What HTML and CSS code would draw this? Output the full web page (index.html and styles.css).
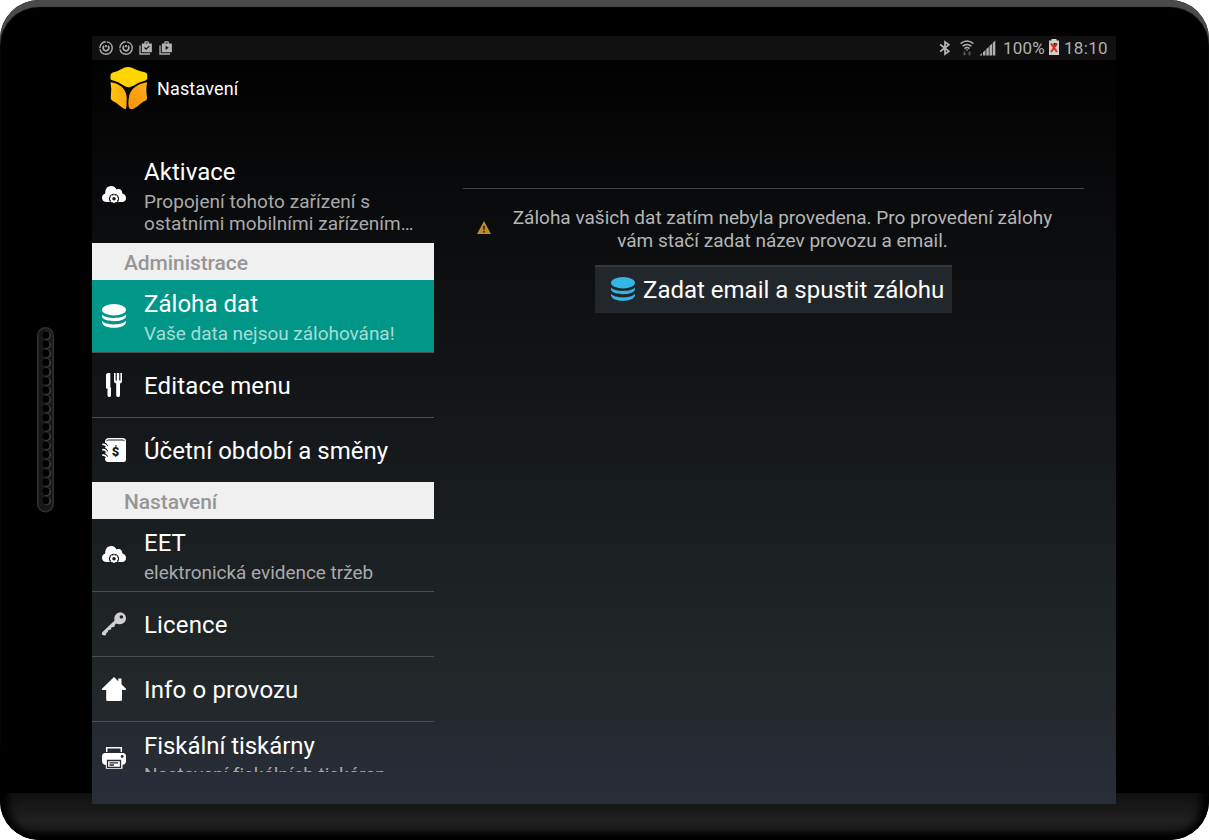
FILE: index.html
```html
<!DOCTYPE html>
<html lang="cs">
<head>
<meta charset="utf-8">
<title>Nastavení</title>
<link rel="stylesheet" href="styles.css">
</head>
<body>
<svg class="defs" aria-hidden="true">
  <symbol id="cloud" viewBox="0 0 24 24">
    <path fill="#fff" d="M4 19C1.500 19 0 17 0 14.800C0 12.500 1.500 11 3.300 10.500C3 6 5 3.300 9 3C12 3 13.700 4.600 14.500 6.500C17.500 5 20.500 7 20.300 10.500C22.500 10.700 24 12.500 24 15C24 17.500 22.500 19 20 19Z"/>
    <circle cx="12" cy="15.800" r="5.100" fill="#16191b"/>
    <circle cx="12" cy="15.800" r="2.700" fill="none" stroke="#fff" stroke-width="1.900"/>
    <path stroke="#fff" stroke-width="1.400" d="M12 11.600v1M12 18.800v1.200M8 15.800h1M15 15.800h1M9 12.800l.9.900M15 12.800l-.9.900M9 18.800l.9-.9M15 18.800l-.9-.9"/>
  </symbol>
  <symbol id="database" viewBox="0 0 24 24">
    <ellipse cx="12" cy="5.700" rx="12" ry="5.700"/>
    <path d="M0 10.500C3 15 21 15 24 10.500V12.200C23 18.800 1 18.800 0 12.200Z"/>
    <path d="M0 16.800C3 21.600 21 21.600 24 16.800V18.300C23 25.700 1 25.700 0 18.300Z"/>
  </symbol>
  <symbol id="circle-app" viewBox="0 0 14 14">
    <g fill="none" stroke="#b0b0b0"><circle cx="7" cy="7" r="6.200" stroke-width="1.400" stroke-dasharray="17.500 1.200 9.500 1.200 8.700 1"/><path stroke-width="1.700" d="M5 4.800A2.900 2.900 0 1 0 9 4.800M7 4v2.200"/></g>
  </symbol>
</svg>
<div class="device">
  <div class="chin"></div>
  <svg class="speaker" width="17" height="186" viewBox="0 0 17 186">
    <defs><pattern id="holes" width="17" height="9.190" patternUnits="userSpaceOnUse" y="3.600">
      <circle cx="9.600" cy="4.800" r="4.300" fill="#484848"/><circle cx="8.900" cy="4.500" r="3.700" fill="#000"/></pattern></defs>
    <rect x=".8" y=".8" width="15.400" height="184" rx="7.700" fill="#171717" stroke="#303030" stroke-width="1.500"/>
    <rect y="3.600" width="17" height="174.600" fill="url(#holes)"/>
  </svg>
  <div class="screen">
    <div class="status">
      <div class="status-left">
        <svg width="14" height="14"><use href="#circle-app"/></svg>
        <svg width="14" height="14"><use href="#circle-app"/></svg>
        <svg width="14" height="14" viewBox="0 0 14 14"><path fill="#b0b0b0" d="M2.800 2.500h2.500V1.200Q5.500.2 6.300.2h2.600q.8 0 1 1V2.500h3v8.700H2.800zM6.600 1.400V2.500h2V1.400z"/><path fill="none" stroke="#b0b0b0" stroke-width="1.300" d="M1 4.500v8.500h10"/><path fill="none" stroke="#111" stroke-width="1.200" d="M5.500 6.500l1.700 1.700 3-3"/></svg>
        <svg width="14" height="14" viewBox="0 0 14 14"><path fill="#b0b0b0" d="M2.800 2.500h2.500V1.200Q5.500.2 6.300.2h2.600q.8 0 1 1V2.500h3v8.700H2.800zM6.600 1.400V2.500h2V1.400z"/><path fill="none" stroke="#b0b0b0" stroke-width="1.300" d="M1 4.500v8.500h10"/><path fill="#111" d="M6.600 4.700v4.200l3.200-2.100z"/></svg>
      </div>
      <div class="status-right">
        <svg class="bt" width="12" height="16" viewBox="0 0 12 16"><path fill="none" stroke="#b4b4b4" stroke-width="1.700" d="M1.200 4.500l8.600 6.700L6 14V2l3.800 2.800L1.200 11.500"/></svg>
        <svg class="wifi" width="14" height="16" viewBox="0 0 14 16"><g fill="none" stroke="#b4b4b4" stroke-width="1.500"><path d="M.6 3.600Q7-1.400 13.400 3.600M2.600 6.200Q7 2.600 11.400 6.200M4.500 8.600Q7 6.600 9.500 8.600"/></g><path fill="#b4b4b4" d="M5.600 9.500h2.800L7 11z"/><path fill="#555" d="M3.700 11.500h1.600v2h1.200l-2 2.200-2-2.200h1.200zM8.700 15.500h1.600v-2h1.200l-2-2.200-2 2.200h1.200z"/></svg>
        <svg class="signal" width="17" height="16" viewBox="0 0 17 16"><path fill="#b0b0b0" d="M.5 15.500L3 13v2.500zM4 15.500V12.200L6.500 10v5.500zM7.300 15.500V9L9.800 7v8.500zM10.500 15.500V6L13 3.800v11.700zM13.700 15.500V3L16.300 .6v14.900z"/></svg>
        <span class="percent">100%</span>
        <svg class="battery" width="10" height="16" viewBox="0 0 10 16"><path fill="#d0d0d0" d="M0 1.500h2.500V0h5v1.500H10V16H0z"/><path fill="#333" d="M4.500 4h3.500v3h-3.500z"/><path stroke="#e02c10" stroke-width="2" d="M2 4.500l6 8.500M8 4.500L2 13"/></svg>
        <span class="clock">18:10</span>
      </div>
    </div>
    <div class="actionbar">
      <svg class="logo" width="38" height="43" viewBox="0 0 38 43">
        <defs><linearGradient id="amber" x1="0" x2="1"><stop offset="0" stop-color="#ffc800"/><stop offset="1" stop-color="#ffa617"/></linearGradient><linearGradient id="orange" x1="1" y1="0" x2="0" y2="1"><stop offset="0" stop-color="#ffb020"/><stop offset="1" stop-color="#f79300"/></linearGradient></defs>
        <path fill="#ffd500" d="M.5 8.500C.5 6.500 2 5.600 4.500 5C10 3.600 12.500 1 16 .3Q19-.3 22 .8C25.500 2.400 29 4.300 34 5Q37.300 5.800 37.300 8V12C36.500 13.700 33 14.200 29.500 15.500C25 17.500 21.500 20.300 18.500 20.300C15 20.200 12 17 7.500 15C4.500 13.700 1 13.500 .5 12Z"/>
        <path fill="url(#amber)" d="M.5 15.300C8 16 16.600 21 16.800 31C16.300 36 17.200 39 15.700 42.300C10 40 8.500 36.500 2 33.500Q.5 32.500.8 30Q2 22 .5 15.300Z"/>
        <path fill="url(#orange)" d="M37.300 15.300C27 17 20.200 21.500 18.800 31C18.200 36 17.800 40.500 20.300 42Q22 42.500 24 41.500C29 39 30.500 35.500 36 33.500Q37.500 32.500 37 30Q35.500 22 37.300 15.300Z"/>
      </svg>
      <h1>Nastavení</h1>
    </div>
    <div class="body">
      <nav class="menu">
        <div class="row flat"><svg class="icon"><use href="#cloud"/></svg><div><p class="title">Aktivace</p><p class="sub wide">Propojení tohoto zařízení s<br>ostatními mobilními zařízením…</p></div></div>
        <h2>Administrace</h2>
        <div class="row active"><svg class="icon"><use href="#database"/></svg><div><p class="title">Záloha dat</p><p class="sub">Vaše data nejsou zálohována!</p></div></div>
        <div class="row single"><svg class="icon" viewBox="0 0 24 24"><path d="M4 2Q4 0 6 0H8.300V14L9 15V22.500Q8.700 24 7.500 24Q5.600 24 5.500 22.500V15.500H4ZM12 0h1.600v7.500h1.200V0h2.400v7.500h1.200V0H20v8q0 2-2 2.500V22.500Q17.800 24 16.200 24Q14.400 24 14.200 22.500V10.500Q12 10 12 8Z"/></svg><p class="title spaced">Editace menu</p></div>
        <div class="row single last"><svg class="icon" viewBox="0 0 24 24"><path d="M6 0H21.500Q24 .5 24 2.500V22Q23.700 24 22 24H5.500Q3.500 23.500 3 21.500V3Q3.500.5 6 0Z"/><path fill="none" stroke="#16191b" stroke-width="1" d="M4.500 3.200Q5 2 6.500 2H20.500Q22 2 22.500 3.200"/><path fill="none" stroke="#16191b" stroke-width="3.200" d="M0 6.500q3-1.500 4.800 2M0 11.900q3-1.500 4.800 2M0 17.300q3-1.500 4.800 2"/><path fill="none" stroke="#fff" stroke-width="1.700" d="M5.200 9Q3 5.500.2 6.500M5.200 14.400Q3 10.900.2 11.900M5.200 19.800Q3 16.300.2 17.300"/><text class="dollar" x="9.700" y="17.800">$</text></svg><p class="title">Účetní období a směny</p></div>
        <h2>Nastavení</h2>
        <div class="row"><svg class="icon"><use href="#cloud"/></svg><div><p class="title">EET</p><p class="sub">elektronická evidence tržeb</p></div></div>
        <div class="row single"><svg class="icon" viewBox="0 0 24 24"><path fill="#d0d0d0" fill-rule="evenodd" d="M17.800.3A6 6 0 0 1 24 6.500A6 6 0 0 1 18 12.300Q15.500 12.500 14.200 11.500L12.700 13L12.800 14.600L9.300 15.400L9 17.600L6.200 18.300L6 20L4.300 21L4 23L2.500 23.500L0 22.800V20.600L12.600 8.500A6.300 6.300 0 0 1 17.800.3ZM19.400 3.200a1.700 1.700 0 1 0 .01 0Z"/></svg><p class="title spaced">Licence</p></div>
        <div class="row single"><svg class="icon" viewBox="0 0 24 24"><path d="M12 0L16.300 4.200V1.500H19.500V7.300L24 11.800V13H20V22.500Q20 24 18.500 24H5.700Q4.200 24 4.200 22.500V13H0V11.800Z"/></svg><p class="title spaced">Info o provozu</p></div>
        <div class="row"><svg class="icon" viewBox="0 0 24 24"><path fill="none" stroke="#fff" stroke-width="1.500" d="M4.700 6V1.800H19.300V6"/><path d="M2.500 7H21.500Q24 7.300 24 10V15Q24 18.500 20.500 19V22.800H3.800V19Q0 18.500 0 15V10Q0 7.300 2.500 7Z"/><path fill="none" stroke="#252a30" stroke-width="1.300" d="M5.500 14.500H18.500V21.300H5.500ZM7.500 16.800H16M7.500 19H12"/><circle cx="20.200" cy="10.500" r="1.400" fill="#252a30"/></svg><div><p class="title tight">Fiskální tiskárny</p><p class="sub clipped">Nastavení fiskálních tiskáren</p></div></div>
      </nav>
      <main class="pane">
        <div class="notice">
          <svg class="warn" width="14" height="13" viewBox="0 0 14 13"><path fill="#c08a2c" d="M7 0L14 13H0Z"/><path fill="#4b390f" d="M6 4.700h2v4H6zM6 9.700h2v1.800H6z"/></svg>
          <p>Záloha vašich dat zatím nebyla provedena. Pro provedení zálohy<br>vám stačí zadat název provozu a email.</p>
        </div>
        <button class="backup"><svg class="icon"><use href="#database"/></svg><span>Zadat email a spustit zálohu</span></button>
      </main>
    </div>
  </div>
</div>
</body>
</html>
```
FILE: styles.css
```css
* { box-sizing: border-box; }
body { margin: 0; background: #fff; font-family: Roboto, "Noto Sans", sans-serif; overflow: hidden; }
h1, h2, p { margin: 0; font-weight: 400; white-space: nowrap; }
.defs { position: absolute; width: 0; height: 0; }
.device {
  position: relative; width: 1209px; height: 840px; padding: 36px 93px 36px 92px;
  border-radius: 39px; background: #000; overflow: hidden;
  box-shadow: inset 0 7px 1px #4b4b4b;
}
.chin {
  position: absolute; left: 0; right: 0; top: 793px; height: 47px;
  background: linear-gradient(#101010, #212121 60%, #191919 75%, #000 95%);
  border-radius: 0 0 39px 39px;
}
.chin::after {
  content: ""; position: absolute; inset: -47px 0 0; border-radius: 0 0 39px 39px;
  box-shadow: inset 10px 0 9px -2px #000, inset -10px 0 9px -2px #000;
}
.speaker { position: absolute; left: 37px; top: 327px; }
.screen {
  position: relative; width: 1024px; height: 768px; display: flex; flex-direction: column;
  background: linear-gradient(#000 0, #0d0e10 29%, #15191b 53%, #22272a 84%, #292d37 98%);
}
.status { height: 24px; background: #111; display: flex; justify-content: space-between; color: #b0b0b0; font-size: 17px; line-height: 24px; }
.status-left { display: flex; align-items: center; gap: 6px; padding-left: 7px; }
.status-right { display: flex; align-items: center; padding-right: 8px; }
.bt { margin-right: 9px; }
.wifi { margin-right: 5px; }
.signal { margin-right: 7px; }
.percent { width: 43px; letter-spacing: .2px; }
.battery { margin: 0 5px 2px 3px; }
.clock { width: 44px; letter-spacing: .3px; }
.actionbar { height: 57px; display: flex; align-items: center; gap: 9px; padding-left: 18px; color: #fff; }
.actionbar h1 { font-size: 18px; letter-spacing: .15px; }
.body { display: flex; height: 655px; padding-top: 31px; }
.menu { width: 342px; height: 624px; overflow: hidden; flex: none; }
.row { display: flex; align-items: center; height: 73px; padding: 1px 0 0 10px; gap: 18px; border-bottom: 1px solid #4b4d50; color: #fff; }
.flat { height: 95px; border-color: transparent; }
.single { height: 65px; }
.last { height: 64px; border: 0; }
.active { background: #009688; }
.icon { width: 24px; height: 24px; flex: none; fill: #fff; }
.row .icon { margin-bottom: 2px; }
.title { font-size: 24px; line-height: 32px; letter-spacing: .04px; }
.spaced { letter-spacing: .15px; }
.tight { letter-spacing: -.06px; }
.sub { margin-top: 3px; font-size: 19px; line-height: 22px; letter-spacing: -.03px; color: #a9aaab; }
.wide { letter-spacing: .05px; }
.clipped { margin-top: 2px; padding-bottom: 1px; }
.active .sub { color: #a5dcd6; }
.menu h2 { height: 37px; padding-left: 32px; background: #f0f0f0; color: #969696; font-size: 21px; line-height: 40px; font-weight: 500; letter-spacing: -.08px; }
.dollar { font: 900 13px Roboto, sans-serif; fill: #16191b; }
.pane { width: 621px; margin: 40px 0 0 29px; border-top: 1px solid #424446; display: flex; flex-direction: column; align-items: center; }
.notice { width: 621px; display: flex; padding-left: 14px; margin-top: 17px; color: #b5b6b7; font-size: 19px; line-height: 23px; }
.warn { margin-top: 15px; }
.notice p { flex: 1; text-align: center; padding-right: 10px; }
.backup { width: 357px; height: 48px; margin-top: 13px; padding: 0 0 0 16px; border: 0; border-top: 2px solid #34373c; background: #22272b; color: #fff; font: 24px Roboto, sans-serif; display: flex; align-items: center; gap: 8px; white-space: nowrap; }
.backup .icon { fill: #33b5e5; margin-bottom: 2px; }
```
